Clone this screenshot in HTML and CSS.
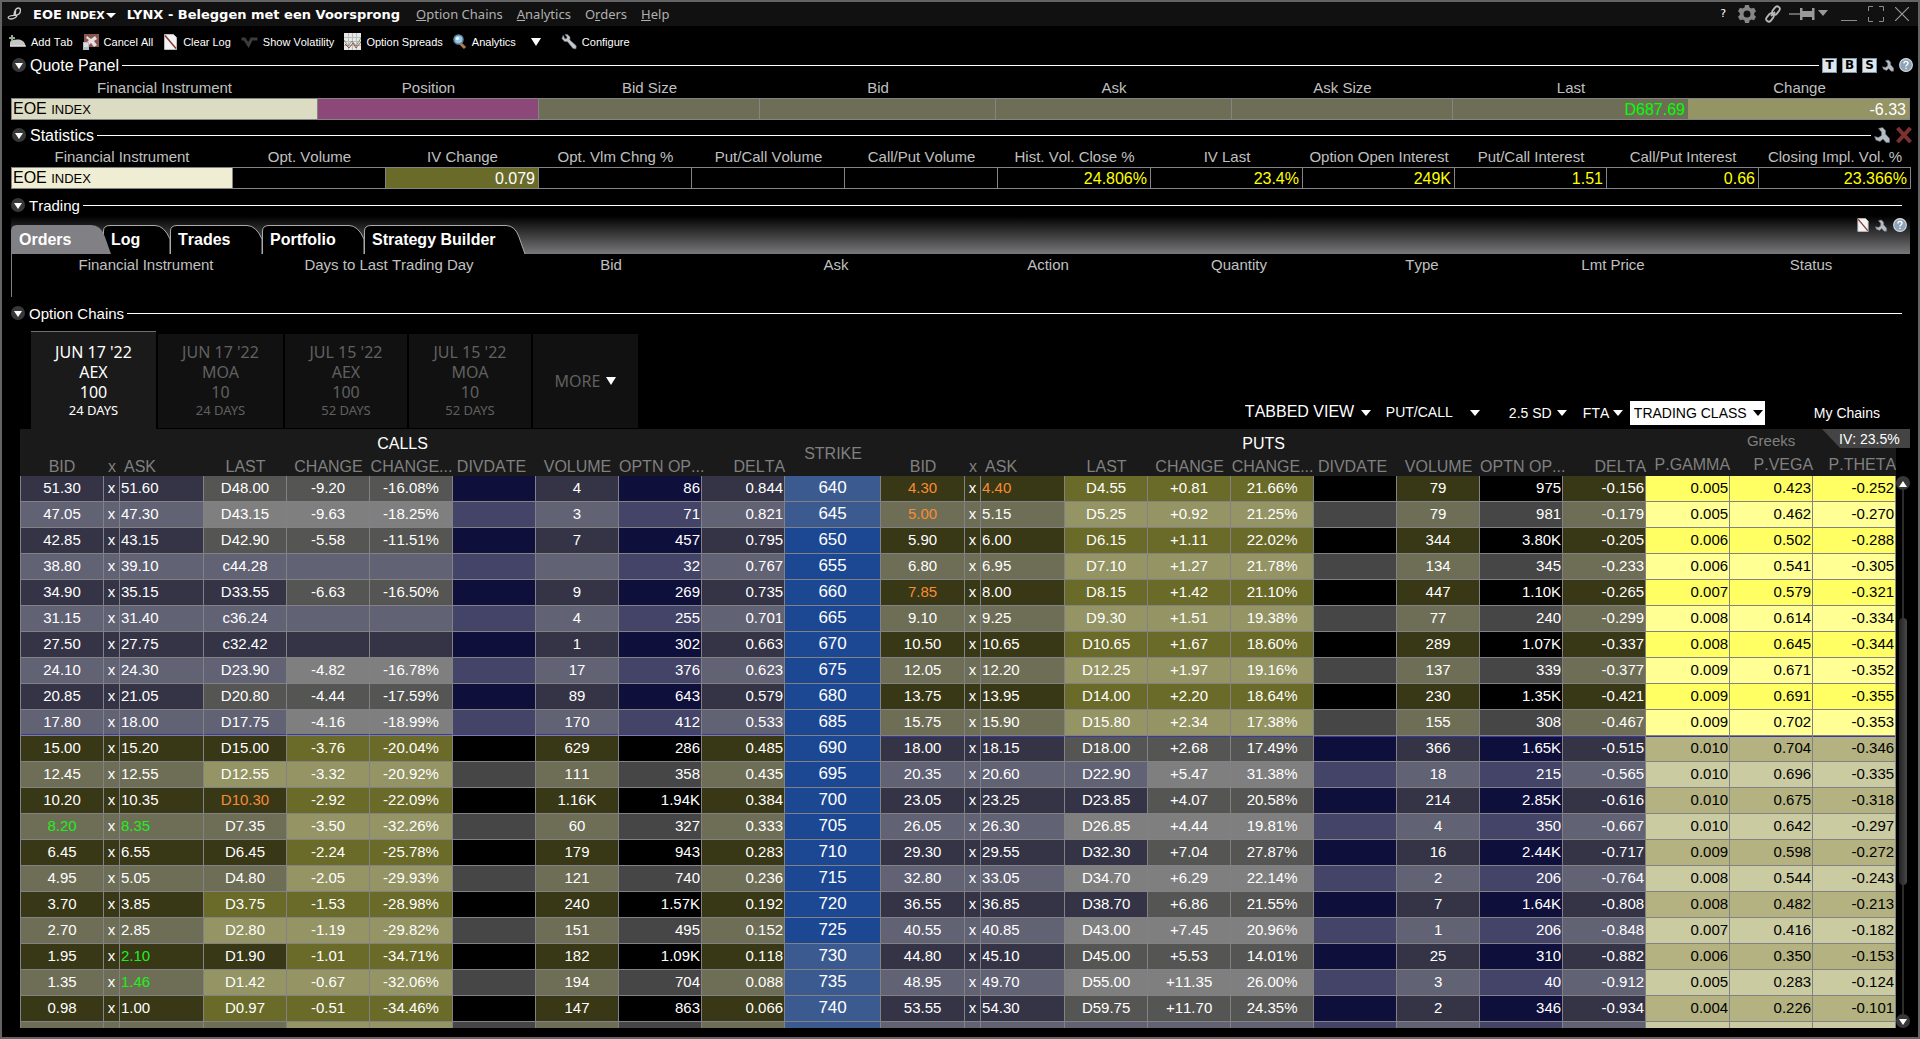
FILE: index.html
```html
<!DOCTYPE html>
<html lang="en">
<head>
<meta charset="utf-8">
<title>EOE INDEX - Option Chains</title>
<link rel="stylesheet" href="styles.css">
</head>
<body>
<svg class="sprite" aria-hidden="true">
  <symbol id="i-wrench" viewBox="0 0 16 16"><path d="M2.2 1.2 1 4.6 3.6 7.4 6.4 7.6 12 14.4 15 14.8 15.2 11.8 8.8 6 9 3 6.4 .6 4 .6 6.2 3 5.4 5 3.6 4.6Z" fill="#c3c8ce" stroke="#7d848c" stroke-width=".6"/></symbol>
  <symbol id="i-wrench-s" viewBox="0 0 16 16"><path d="M4.500 1.500 8.500.5 11.500 3.500V7L15.500 11.500V15.500H12L9 12 6 14.500 2 13 .5 9.500 4.500 10.500 7.500 8.500V5Z" fill="#b4bcc4" stroke="#6d747c" stroke-width=".6"/></symbol>
  <symbol id="i-page" viewBox="0 0 14 16"><path d="M1 .5h9l3 3V15.500H1Z" fill="#f4f4f4" stroke="#bbb"/><path d="M1.500 1.500 12.500 14.500" stroke="#8c3434" stroke-width="1.500"/></symbol>
  <symbol id="i-help" viewBox="0 0 16 16"><circle cx="8" cy="8" r="7.300" fill="#8ea3b8" stroke="#d8dee4" stroke-width="1.200"/><path d="M5.700 6.200c0-3 4.600-3 4.600-.3C10.300 7.700 8 7.600 8 9.600M8 11v1.700" fill="none" stroke="#fff" stroke-width="1.600"/></symbol>
  <symbol id="i-link" viewBox="0 0 18 18"><g fill="none" stroke="#b8b8b8" stroke-width="1.800"><rect x="-4.500" y="-2.600" width="9" height="5.200" rx="2.600" transform="translate(12 5.500) rotate(-52)"/><rect x="-4.500" y="-2.600" width="9" height="5.200" rx="2.600" transform="translate(6 12.500) rotate(-52)"/><path d="M7 11 11 7"/></g></symbol>
</svg>

<div class="window">
  <header class="titlebar">
    <svg class="logo" viewBox="0 0 16 14"><path d="M7 8C7 4 9 1 11.500 1S14 5 12 7 6 8 3 9s-2 3 1 3 6-2 6-4M9 2C8 4 9 6 8 8" fill="none" stroke="#ccc" stroke-width="1.300"/></svg>
    <button class="symbol"><span>EOE <small>INDEX</small></span><i class="tri"></i></button>
    <h1>LYNX - Beleggen met een Voorsprong</h1>
    <nav class="menu">
      <a href="#"><u>O</u>ption Chains</a><a href="#"><u>A</u>nalytics</a><a href="#">O<u>r</u>ders</a><a href="#"><u>H</u>elp</a>
    </nav>
    <div class="wincontrols">
      <button class="q" aria-label="Help">?</button>
      <button class="gear" aria-label="Settings"><svg width="18" height="18" viewBox="0 0 18 18"><path fill-rule="evenodd" fill="#868686" d="M7 0h4l.5 2.500 2 1.100L16 2.700l2 3.500L16.200 8v2l1.800 1.800-2 3.500-2.500-.9-2 1.100L11 18H7l-.5-2.500-2-1.100-2.500.9-2-3.500L1.800 10V8L0 6.200l2-3.500 2.500.9 2-1.100ZM9 5.500a3.500 3.500 0 1 0 0 7 3.500 3.500 0 0 0 0-7Z"/></svg></button>
      <button class="chainlink" aria-label="Link"><svg width="18" height="18"><use href="#i-link"/></svg></button>
      <button class="pin" aria-label="Pin"><svg width="39" height="14" viewBox="0 0 39 14"><path d="M0 7h11" stroke="#666" stroke-width="2"/><path d="M11 1h2.500v3H23V1h2.500v12H23v-3h-9.500v3H11Z" fill="#999"/><path d="M29 3h10l-5 6Z" fill="#999"/></svg></button>
      <button class="min" aria-label="Minimize"><svg width="16" height="16"><path d="M0 14.500h16" stroke="#8a8a8a"/></svg></button>
      <button class="max" aria-label="Maximize"><svg width="16" height="16"><path d="M.5 5V.5H5M11 .5h4.500V5M15.500 11v4.500H11M5 15.500H.5V11" fill="none" stroke="#8a8a8a"/></svg></button>
      <button class="close" aria-label="Close"><svg width="14" height="14"><path d="M0 0 14 14M14 0 0 14" stroke="#9a9a9a" stroke-width="1.200"/></svg></button>
    </div>
  </header>

  <div class="toolbar">
    <button><svg width="17" height="16" viewBox="0 0 17 16"><path d="M1 12.500V9C1 6 5 5.500 9 5.500s7 2 7.500 7Z" fill="#c6c6c6"/><path d="M1 12h16" stroke="#eee"/><path d="M3 1v6M0 4h6" stroke="#8fae8f" stroke-width="2"/></svg>Add Tab</button>
    <button><svg width="16" height="16" viewBox="0 0 16 16"><path d="M1 0h15v13H1Z" fill="#8a5450"/><path d="m4 2 4 3 4-3 2 3-3 2 3 4-3 2-3-4-3 3-2-3 3-3-3-2Z" fill="#e6e0e0"/><path d="M0 8h6v8H0Z" fill="#b9bcc2"/><path d="M1 10h4M1 12h4" stroke="#fff"/></svg>Cancel All</button>
    <button><svg width="15" height="16"><use href="#i-page"/></svg>Clear Log</button>
    <button><svg width="17" height="16" viewBox="0 0 16 16"><path d="M0 5h3l4 6 3-6h6" fill="none" stroke="#3c3c3c" stroke-width="3"/></svg>Show Volatility</button>
    <button><svg width="17" height="17" viewBox="0 0 17 17"><path d="M0 0h17v17H0Z" fill="#e8e8e8"/><path d="M4.500 0v17M8.500 0v17M12.500 0v17M0 4.500h17M0 8.500h17M0 12.500h17" stroke="#bbb"/><path d="m0 7 4 6 4-5 4 5 5-8" fill="none" stroke="#789a70"/><path d="m1 11 4 4 4-5 3 5 5-6" fill="none" stroke="#a05050"/></svg>Option Spreads</button>
    <button><svg width="14" height="16" viewBox="0 0 14 16"><path d="m7 9 5 5" stroke="#b07a50" stroke-width="3"/><circle cx="5.500" cy="5.500" r="4.500" fill="#9cc4e0" stroke="#5a86a8" stroke-width="1.500"/><circle cx="4.500" cy="4.500" r="1.800" fill="#e4f2fa"/></svg>Analytics</button>
    <button class="drop" aria-label="More analytics"><i class="tri big"></i></button>
    <button><svg width="16" height="16"><use href="#i-wrench"/></svg>Configure</button>
  </div>

  <section class="panel quotes">
    <div class="section-head"><button class="fold" aria-label="Collapse"></button><h2>Quote Panel</h2><hr>
      <div class="tools"><button class="key">T</button><button class="key">B</button><button class="key">S</button><svg width="12" height="13"><use href="#i-wrench-s"/></svg><svg width="14" height="14"><use href="#i-help"/></svg></div>
    </div>
    <table class="grid quote">
      <colgroup><col style="width:307px"><col style="width:221px"><col style="width:221px"><col style="width:236px"><col style="width:236px"><col style="width:221px"><col style="width:236px"><col style="width:221px"></colgroup>
      <thead><tr><th>Financial Instrument</th><th>Position</th><th>Bid Size</th><th>Bid</th><th>Ask</th><th>Ask Size</th><th>Last</th><th>Change</th></tr></thead>
      <tbody><tr><td class="name">EOE <small>INDEX</small></td><td class="pos"></td><td></td><td></td><td></td><td></td><td class="up">D687.69</td><td class="chg">-6.33</td></tr></tbody>
    </table>
  </section>

  <section class="panel">
    <div class="section-head"><button class="fold" aria-label="Collapse"></button><h2>Statistics</h2><hr>
      <div class="tools"><svg width="16" height="16"><use href="#i-wrench-s"/></svg><svg width="18" height="16" viewBox="0 0 18 16"><path d="M2.500 1 15.500 15M15.500 1 2.500 15" stroke="#7c3030" stroke-width="4"/></svg></div>
    </div>
    <table class="grid stats">
      <colgroup><col style="width:222px"><col span="6" style="width:153px"><col span="5" style="width:152px"></colgroup>
      <thead><tr><th>Financial Instrument</th><th>Opt. Volume</th><th>IV Change</th><th>Opt. Vlm Chng %</th><th>Put/Call Volume</th><th>Call/Put Volume</th><th>Hist. Vol. Close %</th><th>IV Last</th><th>Option Open Interest</th><th>Put/Call Interest</th><th>Call/Put Interest</th><th>Closing Impl. Vol. %</th></tr></thead>
      <tbody><tr><td class="name">EOE <small>INDEX</small></td><td></td><td class="iv">0.079</td><td></td><td></td><td></td><td>24.806%</td><td>23.4%</td><td>249K</td><td>1.51</td><td>0.66</td><td>23.366%</td></tr></tbody>
    </table>
  </section>

  <section class="panel trading">
    <div class="section-head"><button class="fold" aria-label="Collapse"></button><h2>Trading</h2><hr></div>
    <div class="tabstrip">
      <button class="tab active" style="width:92px"><svg width="100" height="29"><path d="M0 29V6Q0 0 6 0H80Q90 0 94 12L100 29Z" fill="#808085"/></svg><span>Orders</span></button>
      <button class="tab" style="width:67px"><svg width="67" height="29"><path d="M.5 29V6Q.5 .5 7 .5H52Q61 .5 67 14V29" fill="#000" stroke="#aaa"/></svg><span>Log</span></button>
      <button class="tab" style="width:92px"><svg width="92" height="29"><path d="M.5 29V6Q.5 .5 7 .5H77Q86 .5 92 14V29" fill="#000" stroke="#aaa"/></svg><span>Trades</span></button>
      <button class="tab" style="width:102px"><svg width="102" height="29"><path d="M.5 29V6Q.5 .5 7 .5H87Q96 .5 102 14V29" fill="#000" stroke="#aaa"/></svg><span>Portfolio</span></button>
      <button class="tab" style="width:162px"><svg width="162" height="29"><path d="M.5 29V6Q.5 .5 7 .5H142Q151 .5 155 12L161 29" fill="#000" stroke="#aaa"/></svg><span>Strategy Builder</span></button>
      <div class="tools"><svg width="12" height="14"><use href="#i-page"/></svg><svg width="12" height="13"><use href="#i-wrench-s"/></svg><svg width="14" height="14"><use href="#i-help"/></svg></div>
    </div>
    <div class="orders">
      <table class="grid">
        <colgroup><col style="width:268px"><col style="width:218px"><col style="width:226px"><col style="width:224px"><col style="width:200px"><col style="width:182px"><col style="width:184px"><col style="width:198px"><col style="width:198px"></colgroup>
        <thead><tr><th>Financial Instrument</th><th>Days to Last Trading Day</th><th>Bid</th><th>Ask</th><th>Action</th><th>Quantity</th><th>Type</th><th>Lmt Price</th><th>Status</th></tr></thead>
      </table>
    </div>
  </section>

  <section class="panel chains">
    <div class="section-head"><button class="fold" aria-label="Collapse"></button><h2>Option Chains</h2><hr></div>
    <div class="chainbar">
      <div class="expiries">
        <button class="expiry active" style="width:125px"><b>JUN 17 '22</b><b>AEX</b><b>100</b><small>24 DAYS</small></button>
        <button class="expiry" style="width:125px"><b>JUN 17 '22</b><b>MOA</b><b>10</b><small>24 DAYS</small></button>
        <button class="expiry" style="width:122px"><b>JUL 15 '22</b><b>AEX</b><b>100</b><small>52 DAYS</small></button>
        <button class="expiry" style="width:122px"><b>JUL 15 '22</b><b>MOA</b><b>10</b><small>52 DAYS</small></button>
        <button class="expiry more" style="width:105px"><b>MORE <i class="tri big"></i></b></button>
      </div>
      <div class="views">
        <select class="view-mode" aria-label="View"><option>TABBED VIEW</option></select>
        <select class="view-order" aria-label="Order"><option>PUT/CALL</option></select>
        <select class="view-sd" aria-label="Strike range"><option>2.5 SD</option></select>
        <select class="view-ex" aria-label="Exchange"><option>FTA</option></select>
        <select class="view-class" aria-label="Trading class"><option>TRADING CLASS</option></select>
        <button class="mine">My Chains</button>
      </div>
    </div>
    <div class="chain">
      <div class="scroller">
        <table class="options">
          <colgroup>
            <col style="width:84px"><col style="width:16px"><col style="width:84px"><col span="7" style="width:83px"><col style="width:96px">
            <col style="width:84px"><col style="width:16px"><col style="width:84px"><col span="7" style="width:83px"><col style="width:84px"><col span="2" style="width:83px">
          </colgroup>
          <thead>
            <tr><th colspan="10" class="side">CALLS</th><th rowspan="2" class="strikehead">STRIKE</th><th colspan="10" class="side">PUTS</th><th colspan="3" class="greeks">Greeks</th></tr>
            <tr class="cols"><th>BID</th><th>x</th><th class="l">ASK</th><th>LAST</th><th>CHANGE</th><th>CHANGE...</th><th class="div">DIVDATE</th><th>VOLUME</th><th>OPTN OP...</th><th class="r">DELTA</th><th>BID</th><th>x</th><th class="l">ASK</th><th>LAST</th><th>CHANGE</th><th>CHANGE...</th><th class="div">DIVDATE</th><th>VOLUME</th><th>OPTN OP...</th><th class="r">DELTA</th><th class="r g">P.GAMMA</th><th class="r g">P.VEGA</th><th class="r g">P.THETA</th></tr>
          </thead>
          <tbody id="rows"></tbody>
        </table>
      </div>
      <div class="rail"><button class="fold up" aria-label="Scroll up"></button><div class="track"><div class="thumb"></div></div><button class="fold" aria-label="Scroll down"></button></div>
      <div class="ivbadge">IV: 23.5%</div>
    </div>
  </section>
</div>
<script src="app.js"></script>
</body>
</html>
```
FILE: styles.css
```css
* { box-sizing: border-box; }
html, body { height: 100%; margin: 0; }
body {
  background: #000; color: #fff;
  font: 15px/18px "Liberation Sans", Arial, sans-serif;
  font-kerning: none;
}
h1, h2, b { margin: 0; font-weight: normal; }
button { margin: 0; padding: 0; border: 0; background: none; color: inherit; font: inherit; }
svg { display: block; flex: none; }
table { border-collapse: separate; border-spacing: 0; table-layout: fixed; width: 100%; }
th, td { padding: 0; font-weight: normal; white-space: nowrap; }
.sprite { position: absolute; width: 0; height: 0; }

.window { display: flex; flex-direction: column; height: 100vh; border: 2px solid #646464; padding-bottom: 9px; }

.titlebar { display: flex; align-items: center; flex: none; height: 24px; padding-left: 5px; background: #111; }
.logo { width: 16px; height: 14px; }
.symbol, .titlebar h1 { font: bold 13px/18px "DejaVu Sans", Verdana, sans-serif; padding-top: 2px; }
.symbol { display: flex; align-items: center; gap: 1px; margin-left: 10px; }
.symbol small { font-size: 11px; }
.titlebar h1 { margin-left: 11px; }
.tri { border: 5px solid transparent; border-top: 5px solid #fff; border-bottom: 0; }
.tri.big { border-width: 8px 5px 0; }
.menu { display: flex; gap: 14px; margin-left: 16px; font: 13px/18px "Noto Sans", sans-serif; }
.menu a { color: #b0b0b0; text-decoration: none; }
.wincontrols { display: flex; align-items: center; margin-left: auto; padding-right: 9px; }
.q { font: 11px/18px "DejaVu Sans", sans-serif; margin-right: 12px; }
.gear { margin-right: 8px; }
.chainlink { margin-right: 7px; }
.pin { margin-right: 13px; }
.min, .max { margin-right: 11px; }

.toolbar { display: flex; align-items: center; gap: 10px; flex: none; height: 30px; padding: 1px 0 0 7px; font-size: 11px; }
.toolbar button { display: flex; align-items: center; gap: 5px; }
.toolbar .drop { margin: 0 10px 0 5px; }

.panel { flex: none; padding: 0 5px 0 9px; margin-bottom: 7px; }
.quotes { margin-bottom: 6px; }
.section-head { display: flex; align-items: center; height: 18px; padding-left: 1px; }
.section-head h2 { font-size: 16px; margin: 0 3px 0 4px; padding-top: 2px; }
.section-head hr { flex: 1; height: 1px; margin: 0; border: 0; background: #fff; }
.fold { display: block; flex: none; width: 14px; height: 14px; border-radius: 50%; background: #383838; }
.fold::after { content: ""; display: block; width: 0; margin: 1px auto 0; border: 4px solid transparent; border-top: 6px solid #fff; border-bottom: 0; }
.fold.up::after { transform: rotate(180deg); }
.tools { display: flex; align-items: center; gap: 5px; margin-left: 3px; }
.key { width: 15px; height: 15px; border: 1px solid #7d96a8; background: #dfe7ec; color: #000; font: bold 12px/12px "DejaVu Sans", sans-serif; }
.trading .section-head, .chains .section-head { padding: 0 11px 0 0; }
.trading h2, .chains h2 { font-size: 15px; }

.grid { margin-right: 3px; width: calc(100% - 3px); }
.grid th { height: 23px; color: #c0c0c0; vertical-align: middle; padding-top: 3px; }
.grid td { height: 22px; padding: 0 3px; border: 1px solid #848484; border-left: 0; text-align: right; font-size: 16px; }
.grid td:first-child { border-left: 1px solid #848484; }
.grid .name { color: #000; text-align: left; padding-left: 1px; }
.name small { font-size: 13px; }
.quote th { height: 24px; padding-top: 4px; }
.quote td { background: #6e6e56; padding-top: 1px; }
.quote .name { background: #dcdcc2; }
.quote .pos { background: #8b4878; }
.quote .up { color: #0f0; border-right-color: #949464; }
.quote .chg { background: #949464; }
.stats td { color: #ff0; padding-top: 1px; }
.stats .name { background: #efedd4; }
.stats .iv { color: #fff; background: #6b6b29; }

.tabstrip { display: flex; align-items: flex-end; height: 40px; margin-right: 3px; background: linear-gradient(#000 5%, #78787b); }
.tab { position: relative; height: 29px; font-weight: bold; font-size: 16px; text-align: left; padding-left: 8px; }
.tab svg { position: absolute; left: 0; top: 0; }
.tab span { position: relative; }
.tab.active { z-index: 1; }
.tabstrip .tools { margin-left: auto; align-self: flex-start; gap: 6px; padding: 4px 3px 0 0; }
.orders { height: 43px; border-left: 1px solid #808080; }
.orders th { height: 22px; padding-top: 0; }

.chains { flex: 1; min-height: 0; display: flex; flex-direction: column; margin-bottom: 0; padding-right: 0; }
.chains .section-head { flex: none; padding-right: 16px; }
.chainbar { display: flex; align-items: flex-end; justify-content: space-between; flex: none; height: 107px; padding-left: 20px; }
.expiries { display: flex; align-items: flex-end; gap: 2px; }
.expiry { display: flex; flex-direction: column; align-items: center; justify-content: center; height: 94px; margin-bottom: 1px; padding-bottom: 1px; background: #111; color: #606060; font: 16px/20px "Noto Sans", sans-serif; }
.expiry small { font-size: 13px; line-height: 17px; }
.expiry.active { height: 98px; margin-bottom: 0; border-top: 1px solid #707070; background: #1a1a1a; color: #fff; }
.more b { display: flex; align-items: center; gap: 6px; }
.views { display: flex; align-items: center; padding: 0 38px 4px 0; font-size: 14px; }
select {
  appearance: none; height: 24px; margin: 0; padding: 0; border: 0; border-radius: 0; color: #fff; font: inherit;
  background: url("data:image/svg+xml,%3Csvg xmlns='http://www.w3.org/2000/svg' width='10' height='6'%3E%3Cpath d='M0 0h10L5 6z' fill='white'/%3E%3C/svg%3E") no-repeat right center;
}
.view-mode { width: 126px; margin-right: 15px; font-size: 16px; }
.view-mode, .view-order { padding-bottom: 3px; }
.view-order { width: 94px; margin-right: 29px; }
.view-sd { width: 58px; margin-right: 16px; }
.view-ex { width: 40px; margin-right: 7px; }
.view-class {
  width: 135px; margin-right: 49px; padding-left: 4px; color: #000;
  background: #fff url("data:image/svg+xml,%3Csvg xmlns='http://www.w3.org/2000/svg' width='10' height='6'%3E%3Cpath d='M0 0h10L5 6z'/%3E%3C/svg%3E") no-repeat right 2px center;
}

.chain { position: relative; display: flex; flex: 1; min-height: 0; padding-left: 9px; }
.scroller { flex: 1; overflow: hidden; }
.options thead tr { background: #1a1a1a; }
.options th { font-size: 16px; color: #808080; vertical-align: middle; }
.options .side { height: 27px; color: #fff; padding-top: 2px; }
.options .strikehead { padding-top: 2px; }
.options .greeks { font-size: 15px; padding-bottom: 4px; }
.cols th { height: 20px; padding-top: 2px; }
.cols .l { text-align: left; padding-left: 4px; }
.cols .div { padding-right: 6px; }
.cols .r { text-align: right; }
.cols .g { padding: 0 0 2px; }
.options td { height: 26px; padding-bottom: 1px; text-align: center; border: solid #828286; border-width: 0 1px 1px 0; }
.options td:first-child { border-left-width: 1px; }
.options td.l { text-align: left; padding-left: 1px; }
.options td.r { text-align: right; padding-right: 1px; }
.options .blue { background: #343446; }
.options .blue.alt { background: #626275; }
.options .blue.deep { background: #0f0f3b; }
.options .blue.deep.alt { background: #444468; }
.options .blue.hot { background: #555553; }
.options .blue.hot.alt { background: #7f7f7f; }
.options .olive { background: #383716; }
.options .olive.alt { background: #6e6e56; }
.options .olive.deep { background: #000; }
.options .olive.deep.alt { background: #464646; }
.options .olive.hot { background: #6b6b29; }
.options .olive.hot.alt { background: #949464; }
.options .itm { background: #ffff64; color: #000; }
.options .itm.alt { background: #ffff94; }
.options .otm { background: #b3b280; color: #000; }
.options .otm.alt { background: #cbcba2; }
.options .strike { background: #1c4792; font-size: 17px; }
.options .strike.far { background: #3b5b90; }
.options .down { color: #f88c32; }
.options .gain { color: #1df01d; }
.options .edge-b { box-shadow: inset 0 -1px #3a3a9c; }
.options .edge-t { box-shadow: inset 0 1px #3a3a9c; }

.rail { display: flex; flex-direction: column; align-items: center; width: 22px; padding: 47px 8px 0 0; }
.track { flex: 1; width: 8px; background: linear-gradient(90deg, transparent 3px, #2c2c2c 3px, #2c2c2c 5px, transparent 5px); }
.thumb { height: 51%; margin-top: 128px; border-radius: 4px; background: linear-gradient(90deg, #222, #484848); }
.ivbadge { position: absolute; top: 0; right: 8px; width: 88px; height: 19px; padding-left: 17px; background: #444; clip-path: polygon(0 0, 100% 0, 100% 100%, 18px 100%); font-size: 14px; line-height: 20px; }
```
FILE: app.js
```js
// strike | call: bid ask last change pct volume oi delta | put: same | gamma vega theta
// Prefixes: * highlighted cell, ! price down, ^ price up. An underscore is an empty cell.
const chain = `
640|51.30 51.60 *D48.00 -9.20 -16.08% 4 86 0.844|!4.30 !4.40 *D4.55 +0.81 21.66% 79 975 -0.156|0.005 0.423 -0.252
645|47.05 47.30 *D43.15 -9.63 -18.25% 3 71 0.821|!5.00 5.15 *D5.25 +0.92 21.25% 79 981 -0.179|0.005 0.462 -0.270
650|42.85 43.15 *D42.90 -5.58 -11.51% 7 457 0.795|5.90 6.00 *D6.15 +1.11 22.02% 344 3.80K -0.205|0.006 0.502 -0.288
655|38.80 39.10 c44.28 _ _ _ 32 0.767|6.80 6.95 *D7.10 +1.27 21.78% 134 345 -0.233|0.006 0.541 -0.305
660|34.90 35.15 D33.55 -6.63 -16.50% 9 269 0.735|!7.85 8.00 *D8.15 +1.42 21.10% 447 1.10K -0.265|0.007 0.579 -0.321
665|31.15 31.40 c36.24 _ _ 4 255 0.701|9.10 9.25 *D9.30 +1.51 19.38% 77 240 -0.299|0.008 0.614 -0.334
670|27.50 27.75 c32.42 _ _ 1 302 0.663|10.50 10.65 *D10.65 +1.67 18.60% 289 1.07K -0.337|0.008 0.645 -0.344
675|24.10 24.30 D23.90 -4.82 -16.78% 17 376 0.623|12.05 12.20 *D12.25 +1.97 19.16% 137 339 -0.377|0.009 0.671 -0.352
680|20.85 21.05 *D20.80 -4.44 -17.59% 89 643 0.579|13.75 13.95 *D14.00 +2.20 18.64% 230 1.35K -0.421|0.009 0.691 -0.355
685|17.80 18.00 D17.75 -4.16 -18.99% 170 412 0.533|15.75 15.90 *D15.80 +2.34 17.38% 155 308 -0.467|0.009 0.702 -0.353
690|15.00 15.20 D15.00 -3.76 -20.04% 629 286 0.485|18.00 18.15 *D18.00 +2.68 17.49% 366 1.65K -0.515|0.010 0.704 -0.346
695|12.45 12.55 *D12.55 -3.32 -20.92% 111 358 0.435|20.35 20.60 D22.90 +5.47 31.38% 18 215 -0.565|0.010 0.696 -0.335
700|10.20 10.35 !D10.30 -2.92 -22.09% 1.16K 1.94K 0.384|23.05 23.25 D23.85 +4.07 20.58% 214 2.85K -0.616|0.010 0.675 -0.318
705|^8.20 ^8.35 D7.35 -3.50 -32.26% 60 327 0.333|26.05 26.30 *D26.85 +4.44 19.81% 4 350 -0.667|0.010 0.642 -0.297
710|6.45 6.55 D6.45 -2.24 -25.78% 179 943 0.283|29.30 29.55 D32.30 +7.04 27.87% 16 2.44K -0.717|0.009 0.598 -0.272
715|4.95 5.05 D4.80 -2.05 -29.93% 121 740 0.236|32.80 33.05 *D34.70 +6.29 22.14% 2 206 -0.764|0.008 0.544 -0.243
720|3.70 3.85 *D3.75 -1.53 -28.98% 240 1.57K 0.192|36.55 36.85 D38.70 +6.86 21.55% 7 1.64K -0.808|0.008 0.482 -0.213
725|2.70 2.85 *D2.80 -1.19 -29.82% 151 495 0.152|40.55 40.85 *D43.00 +7.45 20.96% 1 206 -0.848|0.007 0.416 -0.182
730|1.95 ^2.10 D1.90 -1.01 -34.71% 182 1.09K 0.118|44.80 45.10 *D45.00 +5.53 14.01% 25 310 -0.882|0.006 0.350 -0.153
735|1.35 ^1.46 *D1.42 -0.67 -32.06% 194 704 0.088|48.95 49.70 *D55.00 +11.35 26.00% 3 40 -0.912|0.005 0.283 -0.124
740|0.98 1.00 *D0.97 -0.51 -34.46% 147 863 0.066|53.55 54.30 *D59.75 +11.70 24.35% 2 346 -0.934|0.004 0.226 -0.101
_|_ _ _ *_ *_ _ _ _|_ _ _ _ _ _ _ _|_ _ _`;

const marks = { '*': 'hot', '!': 'down', '^': 'gain' };
const body = document.getElementById('rows');

chain.trim().split('\n').forEach((line, i) => {
  const [strike, call, put, greeks] = line.split('|');
  const row = body.insertRow();
  const alt = i % 2 ? 'alt' : '';
  const callsItm = i < 10;

  const add = (raw, ...classes) => {
    const mark = marks[raw[0]];
    const text = (mark ? raw.slice(1) : raw).replace('_', '');
    const cell = row.insertCell();
    cell.textContent = text;
    cell.className = [mark, ...classes].filter(Boolean).join(' ');
  };

  const side = (data, tone, edge) => {
    const [bid, ask, last, change, pct, volume, oi, delta] = data.split(' ');
    const hot = v => (v === '_' ? '' : 'hot');
    add(bid, tone, alt, edge);
    add(strike === '_' ? '_' : 'x', tone, alt, edge);
    add(ask, tone, alt, edge, 'l');
    add(last, tone, alt, edge);
    add(change, tone, alt, edge, hot(change));
    add(pct, tone, alt, edge, hot(pct));
    add('_', tone, alt, edge, 'deep');
    add(volume, tone, alt, edge);
    add(oi, tone, alt, edge, 'deep', 'r');
    add(delta, tone, alt, edge, 'r');
  };

  side(call, callsItm ? 'blue' : 'olive', i === 9 ? 'edge-b' : '');
  add(strike, 'strike', i < 2 || i > 17 ? 'far' : '');
  const putEdge = i === 10 ? 'edge-t' : '';
  side(put, callsItm ? 'olive' : 'blue', putEdge);
  greeks.split(' ').forEach(v => add(v, callsItm ? 'itm' : 'otm', alt, putEdge, 'r'));
});
```
